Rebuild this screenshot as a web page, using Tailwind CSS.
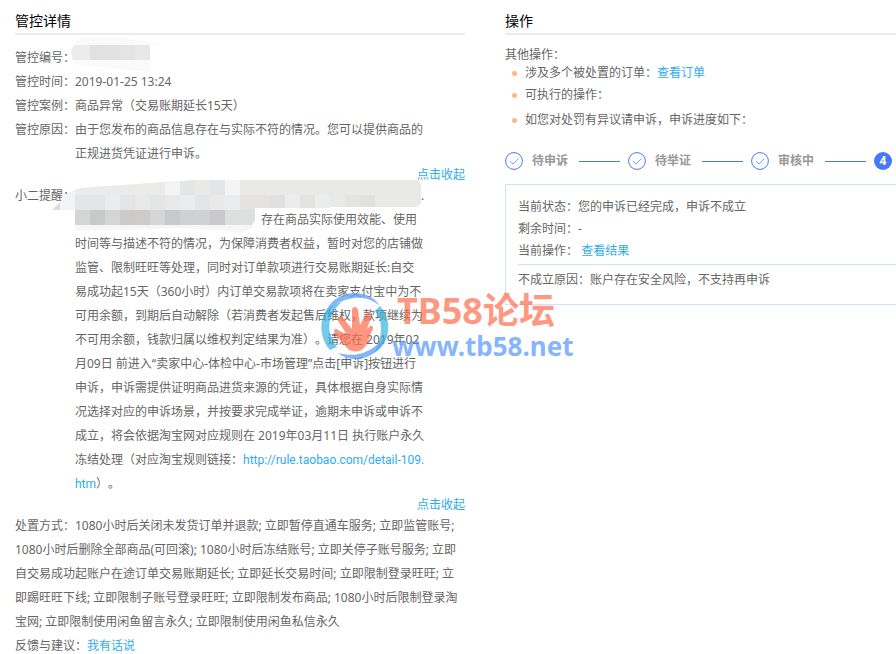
<!DOCTYPE html>
<html lang="zh-CN">
<head>
    <meta charset="UTF-8">
    <meta name="viewport" content="width=device-width, initial-scale=1.0">
    <title>管控详情</title>
    <script src="https://cdn.jsdelivr.net/npm/@tailwindcss/browser@4"></script>
</head>
<body class="relative bg-white overflow-x-hidden font-['Noto_Sans','Noto_Sans_CJK_SC',sans-serif] text-xs text-[#666] [text-spacing-trim:space-all]">
    <main class="grid grid-cols-[minmax(0,450fr)_minmax(0,391fr)] gap-10 pl-[15px] pt-2">
        <section>
            <h1 class="h-[27px] border-b-2 border-[#ebebeb] text-sm leading-[26px] text-black">管控详情</h1>

            <dl class="mt-[11px] grid grid-cols-[60px_minmax(0,1fr)] leading-6 whitespace-nowrap">
                <dt>管控编号：</dt>
                <dd class="relative">
                    <svg class="absolute -left-1 -top-[10px]" width="90" height="36" viewBox="71 36 90 36">
                        <path d="M71 52Q73 38 90 37L125 38L156 43L158 45H150V72L130 70L110 68L78 65Q71 60 71 52Z" fill="#fafafa" />
                        <path d="M71 52L74 45H90V60H73Z" fill="#ececec" />
                        <path d="M90 45h15v15h-15z" fill="#e0e1e3" />
                        <path d="M105 45h15v15h-15z" fill="#e3e2e1" />
                        <path d="M120 45h15v15h-15z" fill="#e3e4e6" />
                        <path d="M135 45h15v15h-15z" fill="#e8e8e8" />
                    </svg>
                </dd>
                <dt>管控时间：</dt>
                <dd>2019-01-25 13:24</dd>
                <dt>管控案例：</dt>
                <dd>商品异常（交易账期延长15天）</dd>
                <dt>管控原因：</dt>
                <dd>由于您发布的商品信息存在与实际不符的情况。您可以提供商品的<br>正规进货凭证进行申诉。</dd>
            </dl>
            <div class="flex h-[18px] justify-end leading-[18px]">
                <button type="button" class="cursor-pointer text-[#2eabf0]">点击收起</button>
            </div>

            <dl class="grid grid-cols-[60px_minmax(0,1fr)] leading-6 whitespace-nowrap">
                <dt>小二提醒：</dt>
                <dd class="relative">
                    <svg class="absolute -left-[25px] -top-1" width="375" height="54" viewBox="50 180 375 54">
                        <path d="M52 210L61 201V210Z" fill="#dcdcdc" />
                        <path d="M60 210V202Q68 190 82 188L195 180H416Q421 181 421 186V203Q420 206 414 207H328V208H255V210Z" fill="#e9e9e8" />
                        <path d="M60 210V202Q66 194 75 190V210Z" fill="#f2f3f4" />
                        <path d="M75 190L82 188L165 182V195H75Z" fill="#ebebea" />
                        <path d="M165 183L180 181V195H165ZM225 180h15v15h-15zM275 195h10v13h-10z" fill="#f4f4f4" />
                        <path d="M105 195h15v15h-15zM180 195h15v15h-15zM225 195h15v15h-15zM285 195h15v13h-15zM315 195h15v13h-15z" fill="#ebecee" />
                        <path d="M75 195h30v15H75zM120 195h15v15h-15zM150 195h15v15h-15zM195 195h15v15h-15zM180 182l15 -2v15h-15zM210 180h15v15h-15z" fill="#e4e5e6" />
                        <path d="M240 195h15v15h-15zM255 195h15v13h-15zM300 195h15v13h-15zM345 195h15v12h-15z" fill="#e5e3e2" />
                        <path d="M270 195h15v13h-15zM360 195h15v12h-15z" fill="#dfe0df" />
                        <path d="M75 225H255Q250 231 240 232L210 230L180 228L150 229L90 231L75 230Z" fill="#f6f6f6" />
                        <path d="M75 210h15v15H75z" fill="#d5d5d5" />
                        <path d="M90 210h15v15H90z" fill="#c8cac9" />
                        <path d="M105 210h15v15h-15z" fill="#d5d5d5" />
                        <path d="M120 210h15v15h-15z" fill="#cbcbcb" />
                        <path d="M135 210h15v15h-15z" fill="#cecbc9" />
                        <path d="M150 210h15v15h-15z" fill="#d5d6d8" />
                        <path d="M165 210h15v15h-15z" fill="#c8c9ca" />
                        <path d="M180 210h30v15h-30z" fill="#d0d1d2" />
                        <path d="M210 210h15v15h-15z" fill="#c9c9cb" />
                        <path d="M225 210h30v10l-3 5h-27z" fill="#dedfdf" />
                    </svg>
                    <span class="pl-[346px]">.</span><br>
                    <span class="pl-[186px]">存在商品实际使用效能、使用</span><br>
                    时间等与描述不符的情况，为保障消费者权益，暂时对您的店铺做<br>
                    监管、限制旺旺等处理，同时对订单款项进行交易账期延长:自交<br>
                    易成功起15天（360小时）内订单交易款项将在卖家支付宝中为不<br>
                    可用余额，到期后自动解除（若消费者发起售后维权，款项继续为<br>
                    不可用余额，钱款归属以维权判定结果为准）。请您在 2019年02<br>
                    月09日 前进入“卖家中心-体检中心-市场管理”点击[申诉]按钮进行<br>
                    申诉，申诉需提供证明商品进货来源的凭证，具体根据自身实际情<br>
                    况选择对应的申诉场景，并按要求完成举证，逾期未申诉或申诉不<br>
                    成立，将会依据淘宝网对应规则在 2019年03月11日 执行账户永久<br>
                    冻结处理（对应淘宝规则链接：<a href="http://rule.taobao.com/detail-109.htm" class="font-[Roboto,sans-serif] text-[#2eabf0]">http://rule.taobao.com/detail-109.<br>htm</a>）。
                </dd>
            </dl>
            <div class="flex h-[18px] justify-end leading-[18px]">
                <button type="button" class="cursor-pointer text-[#2eabf0]">点击收起</button>
            </div>

            <p class="leading-6 whitespace-nowrap">
                处置方式：1080小时后关闭未发货订单并退款; 立即暂停直通车服务; 立即监管账号;<br>
                1080小时后删除全部商品(可回滚); 1080小时后冻结账号; 立即关停子账号服务; 立即<br>
                自交易成功起账户在途订单交易账期延长; 立即延长交易时间; 立即限制登录旺旺; 立<br>
                即踢旺旺下线; 立即限制子账号登录旺旺; 立即限制发布商品; 1080小时后限制登录淘<br>
                宝网; 立即限制使用闲鱼留言永久; 立即限制使用闲鱼私信永久
            </p>
            <p class="leading-6">反馈与建议：<a href="#" class="text-[#2eabf0]">我有话说</a></p>
        </section>

        <section class="overflow-hidden">
            <h2 class="h-[27px] border-b-2 border-[#ebebeb] text-sm leading-[26px] text-black">操作</h2>

            <p class="mt-[11px] leading-[18px]">其他操作：</p>
            <ul class="pl-[7px] leading-[18px] whitespace-nowrap">
                <li class="flex items-center gap-2"><i class="size-[5px] rounded-full bg-[#ffb980]"></i><span>涉及多个被处置的订单：<a href="#" class="text-[#2eabf0]">查看订单</a></span></li>
                <li class="mt-1 flex items-center gap-2"><i class="size-[5px] rounded-full bg-[#ffb980]"></i>可执行的操作：</li>
                <li class="mt-[7px] flex items-center gap-2"><i class="size-[5px] rounded-full bg-[#ffb980]"></i>如您对处罚有异议请申诉，申诉进度如下：</li>
            </ul>

            <ol class="mt-[23px] flex h-[18px] items-center font-bold whitespace-nowrap text-[#999]">
                <li class="flex shrink-0 items-center">
                    <svg class="size-[18px]" viewBox="0 0 18 18" fill="none" stroke="#4478fe"><circle cx="9" cy="9" r="8.4" /><path d="M5 9.3L8 12L13.4 6.6" stroke="#7d9fff" /></svg>
                    <span class="ml-[9px]">待申诉</span>
                    <span class="mr-2 ml-[11px] h-px w-[41px] bg-[#4478fe]"></span>
                </li>
                <li class="flex shrink-0 items-center">
                    <svg class="size-[18px]" viewBox="0 0 18 18" fill="none" stroke="#4478fe"><circle cx="9" cy="9" r="8.4" /><path d="M5 9.3L8 12L13.4 6.6" stroke="#7d9fff" /></svg>
                    <span class="ml-[9px]">待举证</span>
                    <span class="mr-2 ml-[11px] h-px w-[41px] bg-[#4478fe]"></span>
                </li>
                <li class="flex shrink-0 items-center">
                    <svg class="size-[18px]" viewBox="0 0 18 18" fill="none" stroke="#4478fe"><circle cx="9" cy="9" r="8.4" /><path d="M5 9.3L8 12L13.4 6.6" stroke="#7d9fff" /></svg>
                    <span class="ml-[9px]">审核中</span>
                    <span class="mr-2 ml-[11px] h-px w-[41px] bg-[#4478fe]"></span>
                </li>
                <li class="flex size-[18px] shrink-0 items-center justify-center rounded-full bg-[#4478fe] text-white">4</li>
            </ol>

            <div class="mt-[14px] border border-r-0 border-[#d5e1fc] pt-[11px] pb-[13px] pl-3 leading-[22px] whitespace-nowrap">
                <p>当前状态：您的申诉已经完成，申诉不成立</p>
                <p>剩余时间：-</p>
                <p>当前操作： <a href="#" class="text-[#2eabf0]">查看结果</a></p>
                <p class="mt-[2px] border-t border-[#d5e1fc] pt-1">不成立原因：账户存在安全风险，不支持再申诉</p>
            </div>
        </section>
    </main>

    <!-- site watermark, floats over both columns -->
    <div class="pointer-events-none absolute top-[290px] left-[320px] flex items-start font-bold whitespace-nowrap">
        <svg class="w-[72px] shrink-0" height="72" viewBox="0 0 72 72">
            <path d="M3 30C7 12 20 3 35 3C46 3 55 8 60 16C51 8 40 6 29 9C16 12 8 19 3 30Z" fill="#5b9dfb" fill-opacity=".75" />
            <path d="M2 30C0 42 3 52 10 60L17 57C9 47 7 35 12 25C14 20 18 15 22 12C11 15 4 21 2 30Z" fill="#2aaedb" fill-opacity=".65" />
            <path d="M60 16C68 25 70 36 67 47C64 55 60 60 54 63C61 51 63 37 59 28L55 21Z" fill="#2aaedb" fill-opacity=".65" />
            <path d="M67 44C63 59 50 69 36 69C29 69 23 67 18 63C33 67 45 64 54 57C60 53 64 49 67 44Z" fill="#5b9dfb" fill-opacity=".75" />
            <path d="M26 57C23 52 19 51 15 44C13 40 15 37 18 40L27 45L18 31C16 27 20 25 23 28L32 39L32 20C32 16 37 16 38 20L40 35L46 24C48 21 52 23 51 27L47 39L50 36C53 35 54 38 52 41C49 45 50 50 45 57C40 63 31 63 26 57Z" fill="#ff6b4a" fill-opacity=".7" />
        </svg>
        <div class="pt-[3px]">
            <p class="ml-[5px] text-[36px] leading-[35px] text-[#ff6a48]/70">TB58论坛</p>
            <p class="text-[26px] leading-[36px] text-[#4f92ff]/70">www.tb58.net</p>
        </div>
    </div>
</body>
</html>
